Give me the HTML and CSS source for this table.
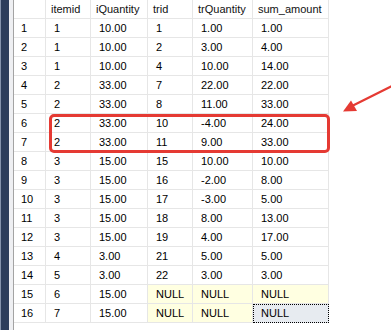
FILE: index.html
```html
<!DOCTYPE html>
<html>
<head>
<meta charset="utf-8">
<link rel="stylesheet" href="styles.css">
</head>
<body>
<div class="frame">
  <div class="edge"></div>
  <div class="gutter"></div>
  <div class="grid-wrap">
    <div class="grid">
      <div class="hc"></div><div class="hc">itemid</div><div class="hc">iQuantity</div><div class="hc">trid</div><div class="hc">trQuantity</div><div class="hc">sum_amount</div>

      <div class="rn">1</div><div class="c">1</div><div class="c">10.00</div><div class="c">1</div><div class="c">1.00</div><div class="c">1.00</div>
      <div class="rn">2</div><div class="c">1</div><div class="c">10.00</div><div class="c">2</div><div class="c">3.00</div><div class="c">4.00</div>
      <div class="rn">3</div><div class="c">1</div><div class="c">10.00</div><div class="c">4</div><div class="c">10.00</div><div class="c">14.00</div>
      <div class="rn">4</div><div class="c">2</div><div class="c">33.00</div><div class="c">7</div><div class="c">22.00</div><div class="c">22.00</div>
      <div class="rn">5</div><div class="c">2</div><div class="c">33.00</div><div class="c">8</div><div class="c">11.00</div><div class="c">33.00</div>
      <div class="rn">6</div><div class="c">2</div><div class="c">33.00</div><div class="c">10</div><div class="c">-4.00</div><div class="c">24.00</div>
      <div class="rn">7</div><div class="c">2</div><div class="c">33.00</div><div class="c">11</div><div class="c">9.00</div><div class="c">33.00</div>
      <div class="rn">8</div><div class="c">3</div><div class="c">15.00</div><div class="c">15</div><div class="c">10.00</div><div class="c">10.00</div>
      <div class="rn">9</div><div class="c">3</div><div class="c">15.00</div><div class="c">16</div><div class="c">-2.00</div><div class="c">8.00</div>
      <div class="rn">10</div><div class="c">3</div><div class="c">15.00</div><div class="c">17</div><div class="c">-3.00</div><div class="c">5.00</div>
      <div class="rn">11</div><div class="c">3</div><div class="c">15.00</div><div class="c">18</div><div class="c">8.00</div><div class="c">13.00</div>
      <div class="rn">12</div><div class="c">3</div><div class="c">15.00</div><div class="c">19</div><div class="c">4.00</div><div class="c">17.00</div>
      <div class="rn">13</div><div class="c">4</div><div class="c">3.00</div><div class="c">21</div><div class="c">5.00</div><div class="c">5.00</div>
      <div class="rn">14</div><div class="c">5</div><div class="c">3.00</div><div class="c">22</div><div class="c">3.00</div><div class="c">3.00</div>
      <div class="rn">15</div><div class="c">6</div><div class="c">15.00</div><div class="c null">NULL</div><div class="c null">NULL</div><div class="c null">NULL</div>
      <div class="rn">16</div><div class="c">7</div><div class="c">15.00</div><div class="c null">NULL</div><div class="c null">NULL</div><div class="c sel">NULL</div>
    </div>
    <div class="highlight"></div>
    <svg class="arrow" width="61" height="45" viewBox="330 75 61 45">
      <line x1="392" y1="86" x2="350" y2="107" stroke="#e53a33" stroke-width="2.2"/>
      <polygon points="343,111.5 351,100.5 357,111" fill="#e53a33"/>
    </svg>
  </div>
</div>
</body>
</html>
```

FILE: styles.css
```css
html, body {
  margin: 0;
  padding: 0;
  background: #ffffff;
}

body {
  width: 391px;
  height: 330px;
  overflow: hidden;
  font-family: "Liberation Sans", Arial, sans-serif;
  font-size: 11px;
  color: #000;
}

.frame {
  display: flex;
  height: 330px;
}

.edge {
  width: 8px;
  border-left: 1px solid #8593ab;
  background: #2c3d5b;
}

.gutter {
  width: 4px;
  background: #eeeff2;
  border-right: 1px solid #a3a3a3;
}

.grid-wrap {
  position: relative;
  flex: 1;
}

.grid {
  display: grid;
  grid-template-columns: 32px 45px 57px 45px 60px 76px;
  grid-auto-rows: 19px;
  width: 315px;
}

.hc,
.rn,
.c {
  box-sizing: border-box;
  border-right: 1px solid #e6e6e6;
  border-bottom: 1px solid #e6e6e6;
  line-height: 18px;
  white-space: nowrap;
  overflow: hidden;
}

.hc {
  padding-left: 5px;
  color: #111;
}

.rn {
  padding-left: 7px;
}

.c {
  padding-left: 8px;
}

.null {
  background: #ffffe1;
}

.sel {
  background: #e7ebf0;
  border: 1px dotted #000;
  line-height: 17px;
  padding-left: 7px;
}

.highlight {
  position: absolute;
  left: 35px;
  top: 114px;
  width: 281px;
  height: 39px;
  box-sizing: border-box;
  border: 3px solid #e53a33;
  border-radius: 5px;
}

.arrow {
  position: absolute;
  left: 316px;
  top: 75px;
}
```
